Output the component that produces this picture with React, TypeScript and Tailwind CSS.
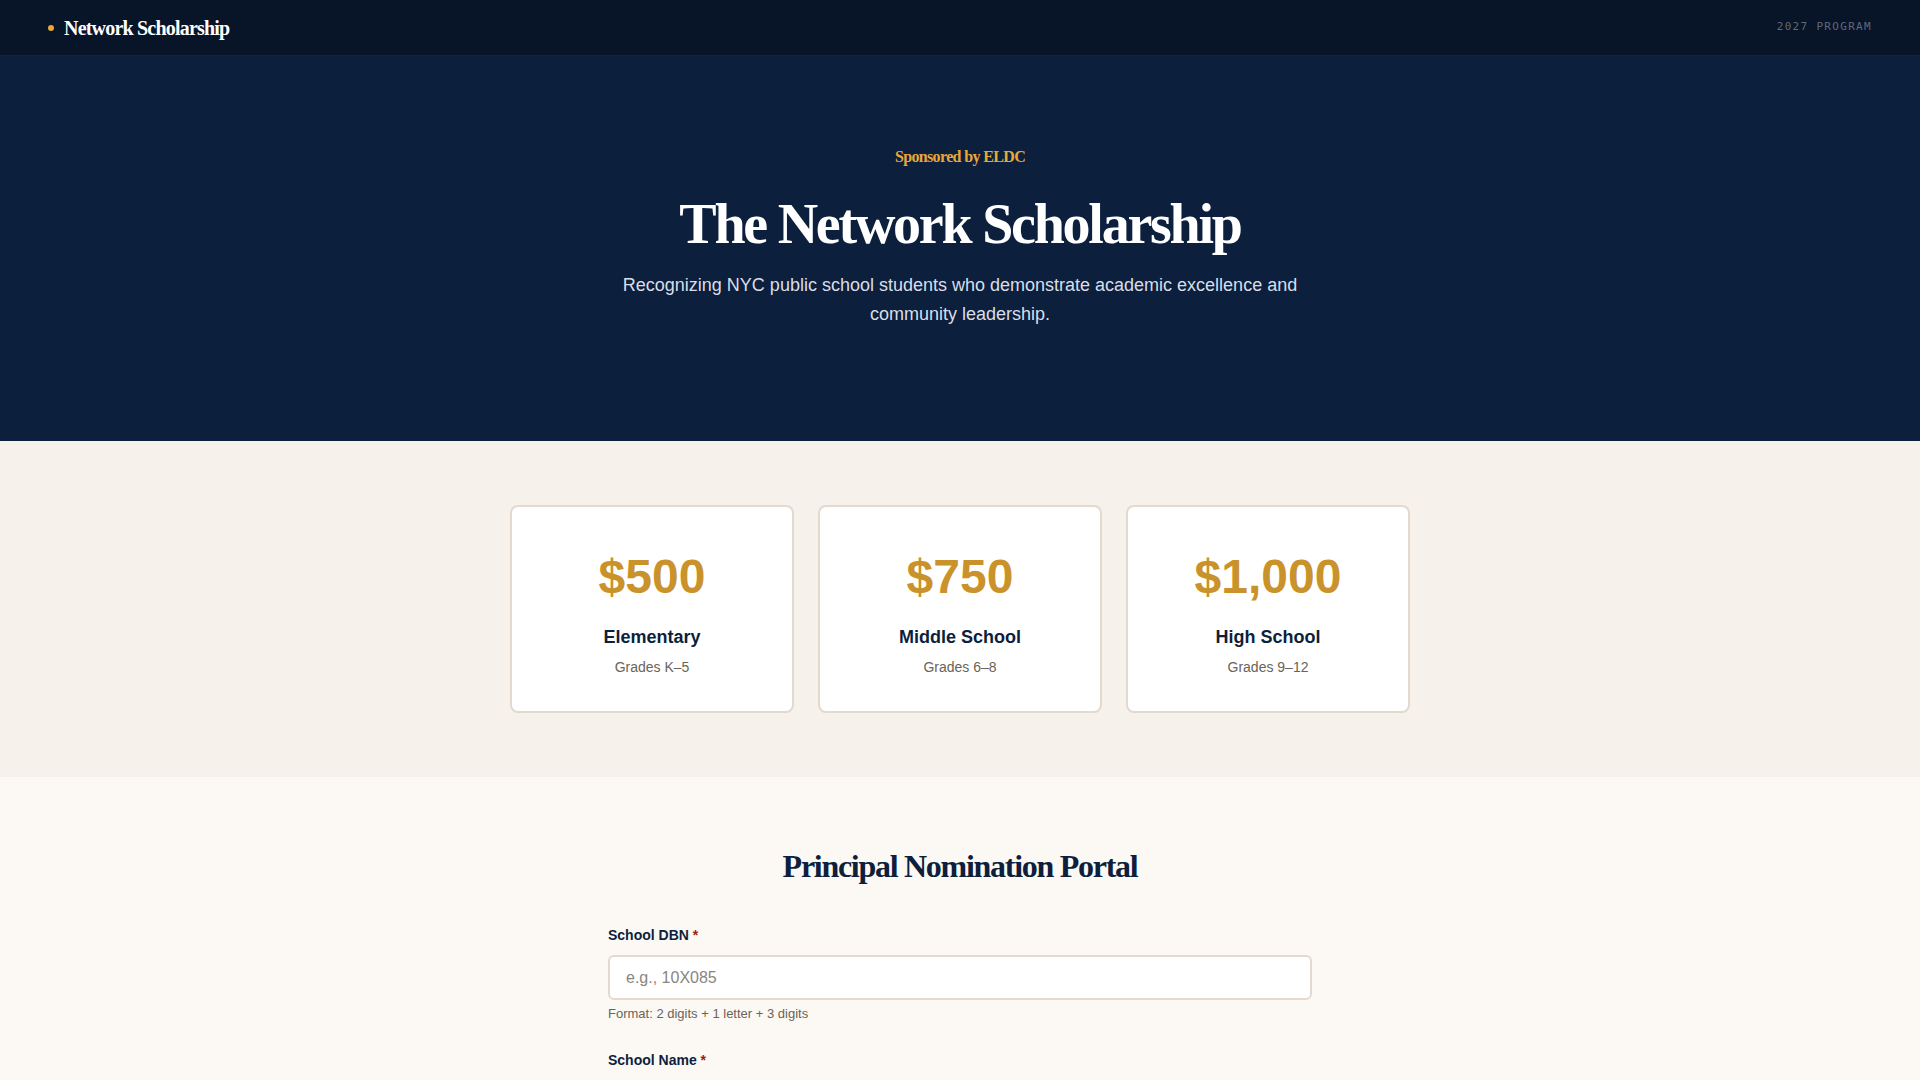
import React from "react";

const serif = { fontFamily: '"Liberation Serif", "Times New Roman", serif' };

function Field({
  label,
  placeholder,
  helper,
}: {
  label: string;
  placeholder: string;
  helper?: string;
}) {
  return (
    <div className="mb-[27px] flex flex-col">
      <label className="mb-[10px] text-[14px] leading-[20px] font-bold text-[#0d1f3c]">
        {label} <span className="text-[#9b1c1c]">*</span>
      </label>
      <input
        className="h-[45px] w-full rounded-[6px] border-2 border-[#e3dacd] bg-white px-[16px] text-[16px] text-[#0d1f3c] placeholder:text-[#8a8580] outline-none"
        placeholder={placeholder}
      />
      {helper && (
        <p className="mt-[5px] text-[13px] leading-[18px] text-[#6b6358]">{helper}</p>
      )}
    </div>
  );
}

function Card({ amount, name, grades }: { amount: string; name: string; grades: string }) {
  return (
    <div className="flex h-[208px] flex-col items-center rounded-[8px] border-2 border-[#e3dacd] bg-white pt-[46px]">
      <div className="text-[48px] leading-[48px] font-bold text-[#c9922a]">{amount}</div>
      <div className="mt-[22px] text-[18px] leading-[28px] font-bold text-[#0d1f3c]">{name}</div>
      <div className="mt-[6px] text-[14px] leading-[20px] text-[#6b6358]">{grades}</div>
    </div>
  );
}

export default function App() {
  return (
    <div
      className="min-h-screen w-full bg-[#fcf9f4]"
      style={{ fontFamily: '"Liberation Sans", Arial, sans-serif' }}
    >
      <header className="flex h-[56px] items-center justify-between border-b border-[#1a2436] bg-[#081428] px-12">
        <div className="flex items-center gap-[10px]">
          <span className="h-[6px] w-[6px] rounded-full bg-[#e8a838]" />
          <span
            className="text-[20px] leading-[28px] font-bold tracking-[-0.04em] text-white"
            style={serif}
          >
            Network Scholarship
          </span>
        </div>
        <span
          className="text-[11px] tracking-[0.12em] text-[#5f697c]"
          style={{ fontFamily: '"DejaVu Sans Mono", "Liberation Mono", monospace' }}
        >
          2027 PROGRAM
        </span>
      </header>

      <section className="flex flex-col items-center bg-[#0c1f3d] pt-[89px] pb-[112px] text-center">
        <div
          className="text-[16px] leading-[24px] font-bold tracking-[-0.04em] text-[#e8a838]"
          style={serif}
        >
          Sponsored by ELDC
        </div>
        <h1
          className="mt-[24px] text-[56px] leading-[62px] font-bold tracking-[-0.04em] text-white"
          style={serif}
        >
          The Network Scholarship
        </h1>
        <p className="mt-[16px] max-w-[690px] text-[18px] leading-[29px] text-[#d9dee7]">
          Recognizing NYC public school students who demonstrate academic excellence and
          community leadership.
        </p>
      </section>

      <section className="flex justify-center bg-[#f6f1ea] py-16">
        <div className="grid w-[900px] grid-cols-3 gap-6">
          <Card amount="$500" name="Elementary" grades="Grades K–5" />
          <Card amount="$750" name="Middle School" grades="Grades 6–8" />
          <Card amount="$1,000" name="High School" grades="Grades 9–12" />
        </div>
      </section>

      <section className="flex flex-col items-center bg-[#fcf9f4] pt-[70px] pb-20">
        <h2
          className="mb-[40px] text-[32px] leading-[38px] font-bold tracking-[-0.04em] text-[#0d1f3c]"
          style={serif}
        >
          Principal Nomination Portal
        </h2>
        <form className="w-[704px]">
          <Field
            label="School DBN"
            placeholder="e.g., 10X085"
            helper="Format: 2 digits + 1 letter + 3 digits"
          />
          <Field label="School Name" placeholder="e.g., P.S. 85 Great Expectations" />
          <Field label="Principal Name" placeholder="Full name" />
        </form>
      </section>
    </div>
  );
}
